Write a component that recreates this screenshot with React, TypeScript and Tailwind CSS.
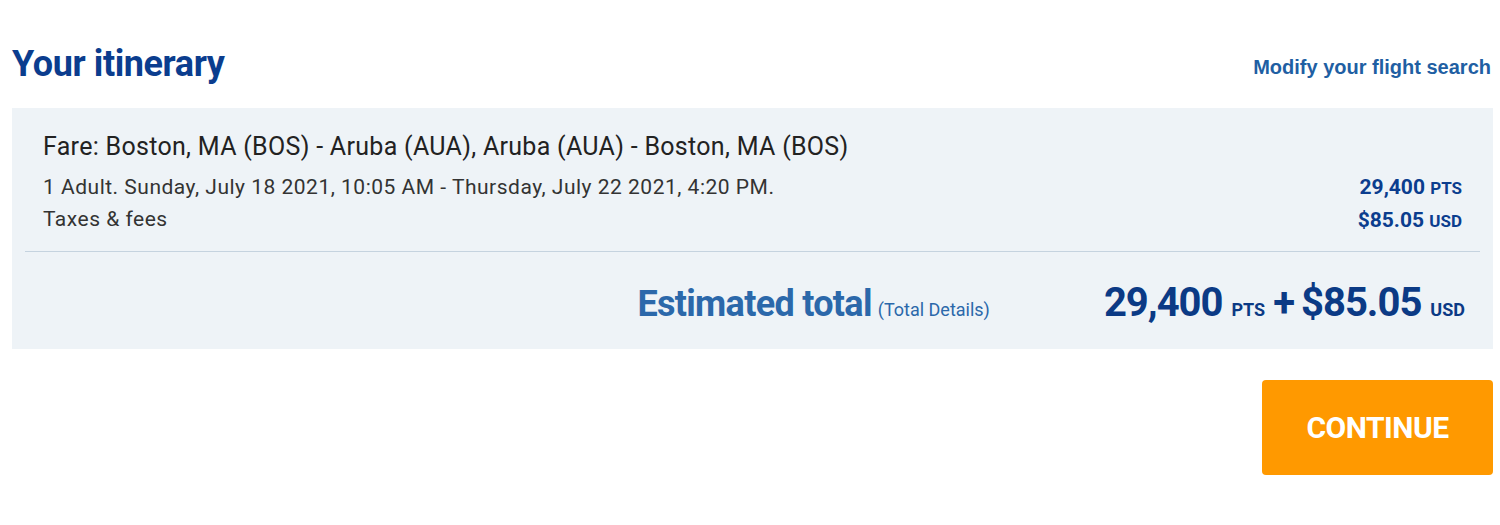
import React from "react";

// Itinerary summary with fare breakdown and continue action

const DIN = { fontFamily: "Roboto, 'Liberation Sans', sans-serif" };

export default function App(): JSX.Element {
  return (
    <div className="w-[1500px] h-[525px] bg-white pt-[42px]" style={DIN}>
      <div className="ml-[12px] w-[1481px]">
        <header className="flex items-end justify-between h-[44px]">
          <h1 className="text-[36px] leading-[44px] font-bold text-[#0b3d8e] tracking-[-0.4px]">Your itinerary</h1>
          <a
            href="#"
            className="mb-[4px] mr-[2px] text-[20px] font-bold text-[#1f5fa3]"
            style={{ fontFamily: "'Liberation Sans', Arial, sans-serif" }}
          >
            Modify your flight search
          </a>
        </header>

        <section className="mt-[22px] bg-[#eef3f7] h-[241px] pt-[23px]">
          <div className="pl-[31px] pr-[31px]">
            <div className="text-[25px] leading-[32px] text-[#222] tracking-[0.3px]">
              Fare: Boston, MA (BOS) - Aruba (AUA), Aruba (AUA) - Boston, MA (BOS)
            </div>
            <div className="mt-[8px] flex justify-between text-[21px] leading-[32px] text-[#333]">
              <div className="tracking-[0.5px]">
                <div>1 Adult. Sunday, July 18 2021, 10:05 AM - Thursday, July 22 2021, 4:20 PM.</div>
                <div>Taxes &amp; fees</div>
              </div>
              <div className="text-right font-bold text-[#0b3d8e]">
                <div className="text-[21px]">
                  29,400 <span className="text-[17px]">PTS</span>
                </div>
                <div className="text-[21px]">
                  $85.05 <span className="text-[17px]">USD</span>
                </div>
              </div>
            </div>
          </div>
          <div className="mx-[13px] mt-[14px] border-t border-[#c5d3df]" />
          <div className="flex items-baseline justify-end pr-[28px] mt-[21px]">
            <span className="text-[36px] font-bold text-[#2b68aa] tracking-[-0.7px]">Estimated total</span>
            <span className="ml-[6px] text-[18px] text-[#2b68aa]">(Total Details)</span>
            <span className="ml-[114px] text-[40px] font-bold text-[#0b3a85] tracking-[-1px]">29,400</span>
            <span className="ml-[9px] text-[18px] font-bold text-[#0b3a85]">PTS</span>
            <span className="ml-[8px] text-[40px] font-bold text-[#0b3a85]">+</span>
            <span className="ml-[6px] text-[40px] font-bold text-[#0b3a85] tracking-[-1px]">$85.05</span>
            <span className="ml-[9px] text-[18px] font-bold text-[#0b3a85]">USD</span>
          </div>
        </section>

        <div className="mt-[31px] flex justify-end">
          <button className="w-[231px] h-[95px] rounded-[4px] bg-[#ff9900] text-white text-[30px] font-bold tracking-[-0.5px]">
            CONTINUE
          </button>
        </div>
      </div>
    </div>
  );
}
